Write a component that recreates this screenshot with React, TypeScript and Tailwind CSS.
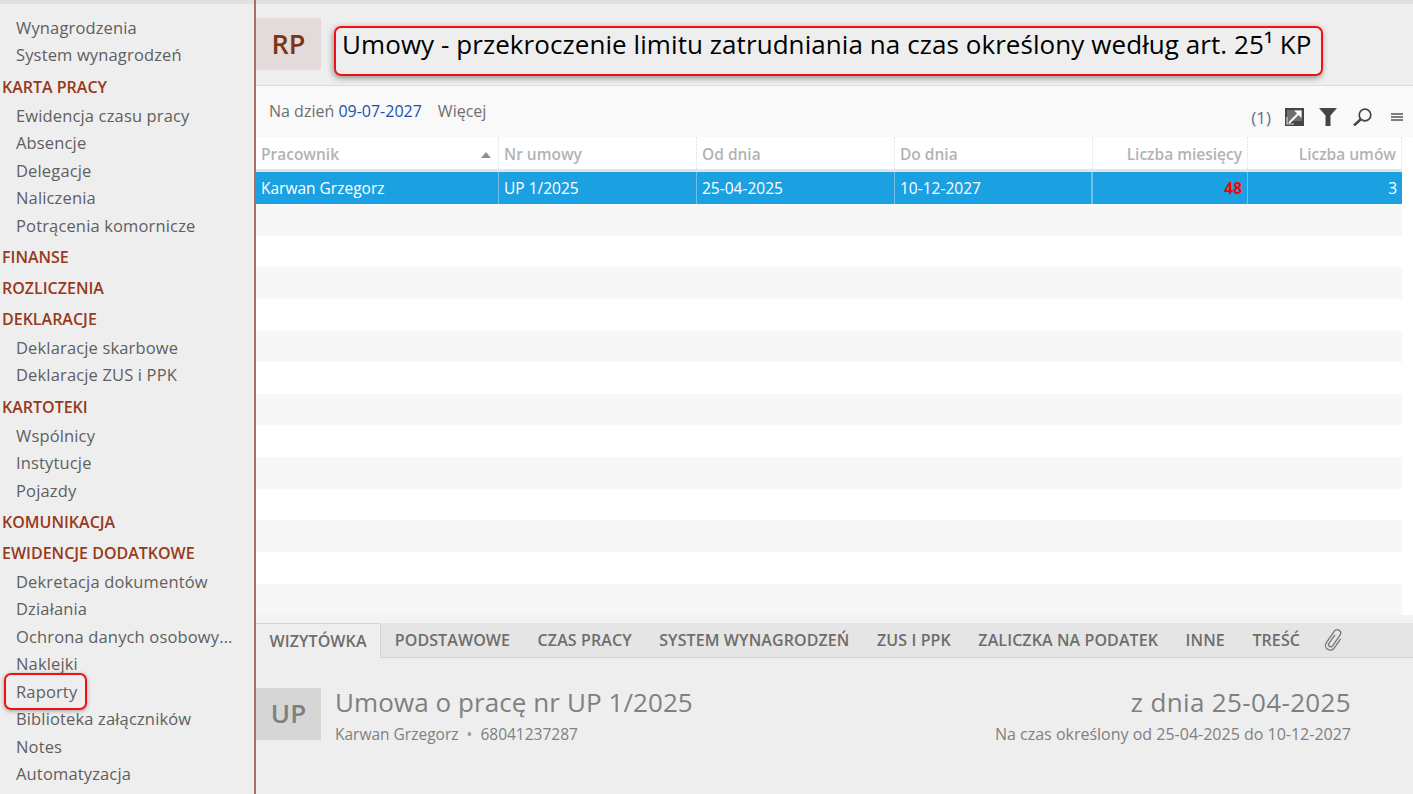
const font = { fontFamily: '"Open Sans", "Noto Sans", sans-serif' };

type Section = { title?: string; items: string[] };

const sections: Section[] = [
  { items: ["Wynagrodzenia", "System wynagrodzeń"] },
  {
    title: "KARTA PRACY",
    items: ["Ewidencja czasu pracy", "Absencje", "Delegacje", "Naliczenia", "Potrącenia komornicze"],
  },
  { title: "FINANSE", items: [] },
  { title: "ROZLICZENIA", items: [] },
  { title: "DEKLARACJE", items: ["Deklaracje skarbowe", "Deklaracje ZUS i PPK"] },
  { title: "KARTOTEKI", items: ["Wspólnicy", "Instytucje", "Pojazdy"] },
  { title: "KOMUNIKACJA", items: [] },
  {
    title: "EWIDENCJE DODATKOWE",
    items: [
      "Dekretacja dokumentów",
      "Działania",
      "Ochrona danych osobowy...",
      "Naklejki",
      "Raporty",
      "Biblioteka załączników",
      "Notes",
      "Automatyzacja",
    ],
  },
];

const tabs = ["PODSTAWOWE", "CZAS PRACY", "SYSTEM WYNAGRODZEŃ", "ZUS I PPK", "ZALICZKA NA PODATEK", "INNE", "TREŚĆ"];

const gridCols = "grid grid-cols-[243px_198px_198px_198px_155px_154px]";

function Sidebar() {
  return (
    <aside className="w-[256px] shrink-0 h-full overflow-hidden bg-[#eeeeee] border-r-2 border-[#a47264] relative">
      <div className="h-[4px] bg-[#e0e0e0]" />
      <nav className="pt-[10.5px]">
        {sections.map((s, i) => (
          <div key={i}>
            {s.title && (
              <div className="h-[31px] flex items-center pl-[2px] text-[16px] font-semibold text-[#97391b]">
                {s.title}
              </div>
            )}
            {s.items.length > 0 && (
              <ul className="pb-[1.75px]">
                {s.items.map((item) => (
                  <li
                    key={item}
                    className={`h-[27.5px] flex items-center pl-[16px] text-[16.5px] tracking-[0.15px] text-[#5f5f5f] whitespace-nowrap ${
                      item === "Raporty" ? "relative" : ""
                    }`}
                  >
                    {item}
                    {item === "Raporty" && (
                      <span className="absolute left-[4px] top-[-6px] w-[83px] h-[37px] rounded-[7px] border-2 border-[#f01010] shadow-[0_1px_4px_rgba(0,0,0,0.35)]" />
                    )}
                  </li>
                ))}
              </ul>
            )}
          </div>
        ))}
      </nav>
    </aside>
  );
}

function Toolbar() {
  return (
    <div className="h-[51px] bg-[#f9f9f9] flex text-[16px] text-[#6f6f6f]">
      <div className="pl-[13px] pt-[13px]">
        Na dzień <span className="text-[#1f4fa8]">09-07-2027</span>
        <span className="ml-[16px]">Więcej</span>
      </div>
      <div className="ml-auto flex items-center h-full pt-[10px] pr-[10px]">
        <span className="text-[#5f7288] text-[17px] mr-[14px] mt-[3px]">(1)</span>
        <svg width="19" height="18" viewBox="0 0 19 18" className="mr-[15px]">
          <path d="M0 0h19v18H0z" fill="#454545" />
          <path d="M2 2h15v11H2z" fill="#f0f0f0" opacity="0.25" />
          <path d="M4 15L14 5" stroke="#fff" strokeWidth="2" fill="none" />
          <path d="M9 2.5h7.5V10z" fill="#fff" />
          <path d="M2 9v7h7" stroke="#d8d8d8" strokeWidth="1.2" fill="none" />
        </svg>
        <svg width="18" height="18" viewBox="0 0 18 18" className="mr-[16px]">
          <path d="M0 0h18l-6.5 7.5V18h-5V7.5z" fill="#454545" />
        </svg>
        <svg width="19" height="18" viewBox="0 0 19 18" className="mr-[19px]">
          <circle cx="12" cy="7" r="5.8" stroke="#454545" strokeWidth="1.7" fill="none" />
          <path d="M7.5 11.5L1 17.5" stroke="#454545" strokeWidth="2.4" />
        </svg>
        <svg width="12" height="8" viewBox="0 0 12 8">
          <path d="M0 1h12M0 4h12M0 7h12" stroke="#555" strokeWidth="1.3" />
        </svg>
      </div>
    </div>
  );
}

function Table() {
  const headCell = "h-[32px] flex items-center px-[5px] pt-[4px] border-r border-dotted border-[#dddddd]";
  const bodyCell = "h-[32px] flex items-center px-[5px] pt-[2px] border-r border-[#6cc1ec]";
  return (
    <div className="w-[1146px]">
      <div className={`${gridCols} bg-white text-[15.5px] font-semibold text-[#b3b3b3] border-b-[3px] border-[#e4e4e4]`}>
        <div className={`${headCell} justify-between`}>
          Pracownik
          <span className="w-0 h-0 mr-[2px] border-x-[5px] border-x-transparent border-b-[6px] border-b-[#8f8f8f]" />
        </div>
        <div className={headCell}>Nr umowy</div>
        <div className={headCell}>Od dnia</div>
        <div className={headCell}>Do dnia</div>
        <div className={`${headCell} justify-end`}>Liczba miesięcy</div>
        <div className={`${headCell} justify-end`}>Liczba umów</div>
      </div>
      <div className={`${gridCols} bg-[#1ba1e2] text-white text-[15.5px]`}>
        <div className={bodyCell}>Karwan Grzegorz</div>
        <div className={bodyCell}>UP 1/2025</div>
        <div className={bodyCell}>25-04-2025</div>
        <div className={`${bodyCell} border-r-2`}>10-12-2027</div>
        <div className={`${bodyCell} justify-end font-bold text-[#ff0000]`}>48</div>
        <div className="h-[32px] flex items-center justify-end px-[5px] pt-[2px]">3</div>
      </div>
      {Array.from({ length: 13 }).map((_, i) => (
        <div key={i} className={`h-[31.65px] ${i % 2 === 0 ? "bg-[#f7f7f7]" : "bg-white"}`} />
      ))}
    </div>
  );
}

function Tabs() {
  return (
    <div className="h-[35px] bg-[#e5e5e5] border-b border-[#d4d4d4] flex items-stretch text-[16px] font-semibold tracking-[0.1px] text-[#6d6d6d]">
      <div className="w-[125px] bg-[#eeeeee] border-r border-t border-[#d4d4d4] -mb-px flex items-center justify-center">
        WIZYTÓWKA
      </div>
      {tabs.map((t) => (
        <div key={t} className="flex items-center px-[13.75px] whitespace-nowrap">
          {t}
        </div>
      ))}
      <div className="flex items-center pl-[7px]">
        <svg width="26" height="26" viewBox="0 0 26 30" fill="none" stroke="#767676" strokeWidth="1.5">
          <path
            transform="rotate(35 13 15) translate(0.5 0.5)"
            d="M10 9V21a2.5 2.5 0 0 0 5 0V6a4 4 0 0 0-8 0V22a5.5 5.5 0 0 0 11 0V9"
          />
        </svg>
      </div>
    </div>
  );
}

function Details() {
  return (
    <div className="flex-1 bg-[#eeeeee] flex pt-[30px] pr-[62px]">
      <div className="w-[65px] h-[52px] bg-[#d6d6d6] flex items-center justify-center text-[26px] font-semibold text-[#808080]">
        UP
      </div>
      <div className="ml-[14px] mt-[-4px]">
        <div className="text-[26px] tracking-[0.08px] leading-[36px] text-[#808080]">Umowa o pracę nr UP 1/2025</div>
        <div className="text-[15.5px] leading-[22px] mt-[3px] text-[#808080]">
          Karwan Grzegorz <span className="mx-[4px] text-[#9a9a9a]">•</span> 68041237287
        </div>
      </div>
      <div className="ml-auto mt-[-4px] text-right text-[#808080]">
        <div className="text-[26px] tracking-[0.35px] leading-[36px]">z dnia 25-04-2025</div>
        <div className="text-[16px] leading-[22px] mt-[3px]">Na czas określony od 25-04-2025 do 10-12-2027</div>
      </div>
    </div>
  );
}

export default function App() {
  return (
    <div style={font} className="w-[1413px] h-[794px] overflow-hidden flex bg-white">
      <Sidebar />
      <main className="flex-1 min-w-0 h-full flex flex-col">
        <div className="h-[4px] bg-[#e0e0e0]" />
        <header className="h-[82px] bg-[#eeeeee] border-b border-[#dcdcdc] flex pt-[14px]">
          <div className="w-[65px] h-[52px] bg-[#e3dbd9] flex items-center justify-center text-[27px] font-semibold text-[#7b3517]">
            RP
          </div>
          <div className="ml-[13px] mt-[8px] w-[989px] h-[50px] rounded-[7px] border-2 border-[#f01010] shadow-[-1px_2px_6px_rgba(0,0,0,0.4)] pl-[6px] pb-[14px] flex items-center text-[26px] tracking-[0.07px] text-black whitespace-nowrap">
            Umowy - przekroczenie limitu zatrudniania na czas określony według art. 25¹ KP
          </div>
        </header>
        <Toolbar />
        <Table />
        <div className="h-[7.5px] bg-[#f3f3f3]" />
        <Tabs />
        <Details />
      </main>
    </div>
  );
}
